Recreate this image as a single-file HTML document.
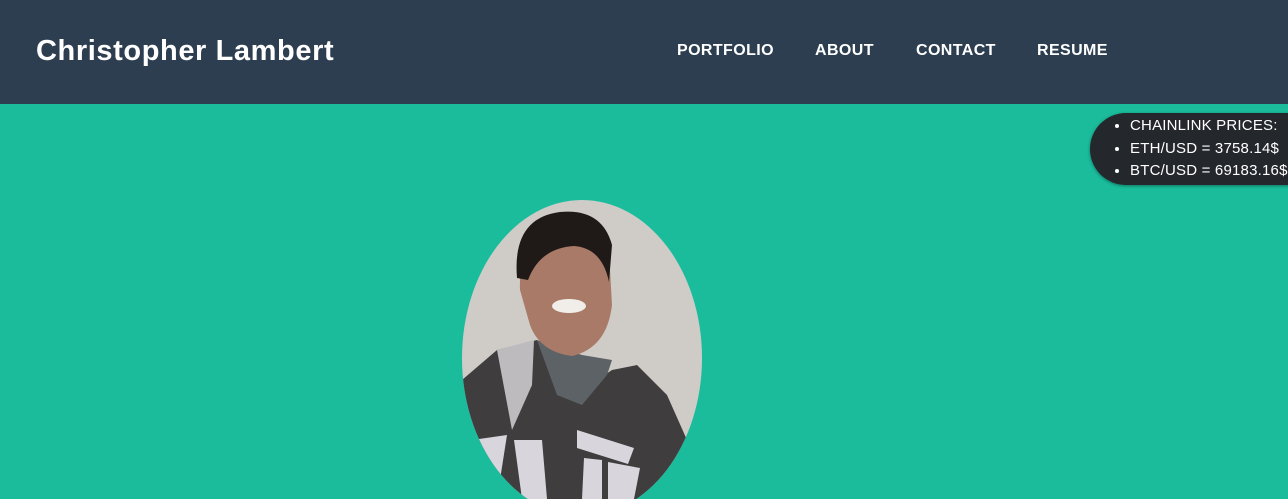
<!DOCTYPE html>
<html><head><meta charset="utf-8"><style>
*{margin:0;padding:0;box-sizing:border-box}
body{width:1288px;height:499px;overflow:hidden;background:#1abc9c;font-family:"Liberation Sans",sans-serif;position:relative}
header{position:absolute;left:0;top:0;width:1288px;height:104px;background:#2c3e50}
.brand{position:absolute;left:36px;top:35px;color:#fff;font-weight:bold;font-size:29px;letter-spacing:0.6px}
nav a{position:absolute;top:42px;color:#fff;font-weight:bold;font-size:16px;text-decoration:none;letter-spacing:0.4px}
.pill{position:absolute;left:1090px;top:113px;width:220px;height:72px;background:#24272b;border-radius:36px 0 0 36px;box-shadow:0 1px 3px rgba(0,0,0,.4);color:#fff;font-size:15px}
.pill ul{position:absolute;left:40px;top:2px;line-height:22.5px;letter-spacing:0.2px}
.pill li{white-space:nowrap}
svg{position:absolute;left:462px;top:200px}
</style></head><body>
<header><div class="brand">Christopher Lambert</div>
<nav><a style="left:677px">PORTFOLIO</a><a style="left:815px">ABOUT</a><a style="left:916px">CONTACT</a><a style="left:1037px">RESUME</a></nav></header>
<div class="pill"><ul><li>CHAINLINK PRICES:</li><li>ETH/USD = 3758.14$</li><li>BTC/USD = 69183.16$</li></ul></div>
<svg width="240" height="299" viewBox="0 0 240 299">
<defs><clipPath id="c"><ellipse cx="120" cy="158" rx="120" ry="158"/></clipPath></defs>
<g clip-path="url(#c)">
<rect width="240" height="320" fill="#cfccc8"/>
<path d="M0 180 L35 150 L75 140 L100 170 L120 190 L150 170 L175 165 L205 195 L225 240 L230 320 L0 320Z" fill="#403d3f"/>
<path d="M35 150 L72 140 L70 185 L50 230 Z" fill="#bdbbbd"/>
<path d="M75 140 L95 195 L120 205 L145 175 L150 160 L120 155Z" fill="#5c6265"/>
<path d="M58 90 Q56 35 100 28 Q142 26 148 70 L150 105 Q145 148 110 156 Q78 152 68 125 Z" fill="#a97a68"/>
<path d="M55 78 Q50 18 98 12 Q140 8 150 45 L147 82 Q140 48 112 46 Q78 48 66 80 Z" fill="#1f1a18"/>
<ellipse cx="107" cy="106" rx="17" ry="7" fill="#f1eeea"/>
<path d="M10 240 L45 235 L35 299 L12 299Z M52 240 L80 240 L85 299 L60 299Z M115 230 L172 248 L166 264 L115 248Z M122 258 L140 260 L140 299 L120 299Z M146 262 L178 268 L172 299 L146 299Z" fill="#d8d6dc"/>
</g></svg>
</body></html>
